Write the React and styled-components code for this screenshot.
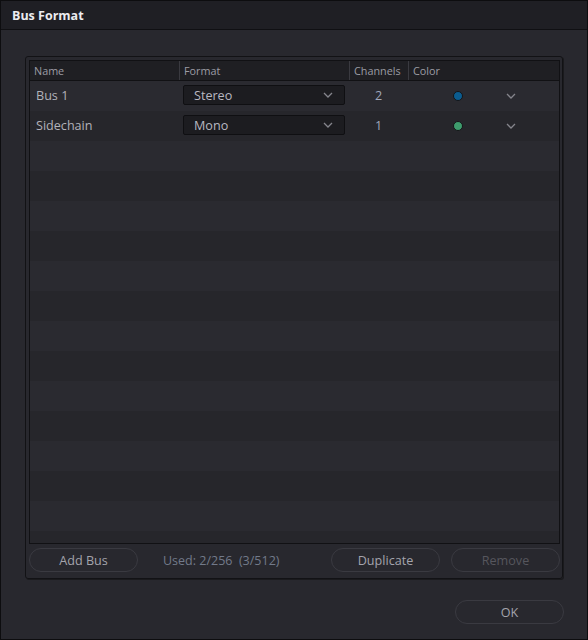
import React from 'react';
import styled, { createGlobalStyle } from 'styled-components';

const GlobalStyle = createGlobalStyle`
  html, body {
    margin: 0;
    padding: 0;
    background: #28282e;
  }
  * {
    box-sizing: border-box;
  }
`;

const buses = [
  { name: 'Bus 1', format: 'Stereo', channels: 2, color: '#0b5c8f' },
  { name: 'Sidechain', format: 'Mono', channels: 1, color: '#3e9c6d' },
];

const Dialog = styled.div`
  width: 588px;
  height: 640px;
  display: flex;
  flex-direction: column;
  background: #28282e;
  border: 1px solid #0d0d0f;
  font-family: 'Open Sans', 'Noto Sans', sans-serif;
`;

const TitleBar = styled.div`
  height: 29px;
  flex: none;
  display: flex;
  align-items: center;
  padding-left: 11px;
  background: #1f1f24;
  border-bottom: 1px solid #101013;
  color: #ececf0;
  font-size: 12.5px;
  font-weight: 700;
`;

const Body = styled.div`
  padding: 26px 24px 0 24px;
`;

const Panel = styled.div`
  width: 538px;
  height: 523px;
  display: flex;
  flex-direction: column;
  padding: 3px 2px 0 3px;
  border: 1px solid #121215;
  border-radius: 3px;
  box-shadow: 1px 1px 0 #1a1a1d;
`;

const Table = styled.div`
  height: 484px;
  display: flex;
  flex-direction: column;
  border: 1px solid #111114;
  overflow: hidden;
`;

const HeaderRow = styled.div`
  height: 20px;
  flex: none;
  display: grid;
  grid-template-columns: 149px 170px 59px 1fr;
  background: #1f1f23;
  border-bottom: 1px solid #111114;
`;

const HeaderCell = styled.div`
  display: flex;
  align-items: center;
  padding-left: 4px;
  color: #9c9ca4;
  font-size: 10.8px;
  border-left: ${(p) => (p.$first ? 'none' : '1px solid #3a3a40')};
`;

const Row = styled.div`
  height: 30px;
  flex: none;
  display: grid;
  grid-template-columns: 149px 170px 59px 1fr;
  align-items: center;
  background: ${(p) => (p.$odd ? '#26262b' : '#2a2a30')};
`;

const NameCell = styled.div`
  padding-left: 6px;
  margin-top: -1px;
  color: #b2b2ba;
  font-size: 12.6px;
`;

const FormatCell = styled.div`
  padding-left: 4px;
`;

const Select = styled.div`
  width: 162px;
  height: 20px;
  display: flex;
  align-items: center;
  justify-content: space-between;
  padding: 0 11px 0 10px;
  margin-top: -2px;
  background: #1c1c20;
  border: 1px solid #0f0f12;
  border-radius: 2px;
  color: #b8b8c0;
  font-size: 12.6px;
`;

const ChannelCell = styled.div`
  text-align: center;
  margin-top: -1px;
  color: #a0a8bb;
  font-size: 12.6px;
`;

const ColorCell = styled.div`
  display: flex;
  align-items: center;
  padding-left: 45px;
  margin-top: -1px;
`;

const Dot = styled.span`
  width: 10px;
  height: 10px;
  border-radius: 50%;
  background: ${(p) => p.$color};
  border: 1px solid #141417;
`;

const ChevronWrap = styled.span`
  display: flex;
  margin-left: 43px;
`;

const Footer = styled.div`
  display: flex;
  align-items: center;
  margin-top: 4px;
`;

const Button = styled.div`
  width: 109px;
  height: 24px;
  display: flex;
  align-items: center;
  justify-content: center;
  border: 1px solid #3a3a41;
  border-radius: 12px;
  color: ${(p) => (p.$disabled ? '#56565d' : '#a4a4ac')};
  font-size: 12.6px;
  margin-left: ${(p) => p.$gap || 0}px;
`;

const Used = styled.div`
  margin-left: 25px;
  color: #727a8a;
  font-size: 12.5px;
  white-space: pre;
  flex: 1;
`;

const Actions = styled.div`
  display: flex;
  justify-content: flex-end;
  padding: 21px 23px 0 0;
`;

const Chevron = () => (
  <svg width="10" height="6" viewBox="0 0 10 6">
    <path d="M1 1 L5 5 L9 1" fill="none" stroke="#85858c" strokeWidth="1.3" />
  </svg>
);

export default function App() {
  const filler = Array.from({ length: 14 });
  return (
    <>
      <GlobalStyle />
      <Dialog>
        <TitleBar>Bus Format</TitleBar>
        <Body>
          <Panel>
            <Table>
              <HeaderRow>
                <HeaderCell $first>Name</HeaderCell>
                <HeaderCell>Format</HeaderCell>
                <HeaderCell>Channels</HeaderCell>
                <HeaderCell>Color</HeaderCell>
              </HeaderRow>
              {buses.map((bus, i) => (
                <Row key={bus.name} $odd={i % 2 === 1}>
                  <NameCell>{bus.name}</NameCell>
                  <FormatCell>
                    <Select>
                      {bus.format}
                      <Chevron />
                    </Select>
                  </FormatCell>
                  <ChannelCell>{bus.channels}</ChannelCell>
                  <ColorCell>
                    <Dot $color={bus.color} />
                    <ChevronWrap>
                      <Chevron />
                    </ChevronWrap>
                  </ColorCell>
                </Row>
              ))}
              {filler.map((_, i) => (
                <Row key={i} $odd={(i + buses.length) % 2 === 1} />
              ))}
            </Table>
            <Footer>
              <Button>Add Bus</Button>
              <Used>{'Used: 2/256  (3/512)'}</Used>
              <Button>Duplicate</Button>
              <Button $gap={11} $disabled>
                Remove
              </Button>
            </Footer>
          </Panel>
        </Body>
        <Actions>
          <Button>OK</Button>
        </Actions>
      </Dialog>
    </>
  );
}
